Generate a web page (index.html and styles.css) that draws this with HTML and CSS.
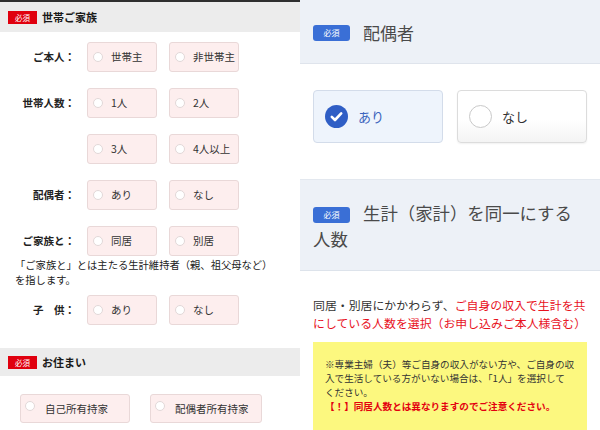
FILE: index.html
```html
<!DOCTYPE html>
<html lang="ja">
<head>
<meta charset="utf-8">
<title>フォーム</title>
<link rel="stylesheet" href="styles.css">
</head>
<body>
<div class="shot">
  <section class="left">
    <div class="topbar"></div>
    <div class="sec-head"><span class="req">必須</span><span class="sec-title">世帯ご家族</span></div>
    <div class="rows">
      <div class="row first"><div class="lbl">ご本人：</div><label class="opt"><span class="radio"></span>世帯主</label><label class="opt"><span class="radio"></span>非世帯主</label></div>
      <div class="row"><div class="lbl">世帯人数：</div><label class="opt"><span class="radio"></span>1人</label><label class="opt"><span class="radio"></span>2人</label></div>
      <div class="row"><div class="lbl"></div><label class="opt"><span class="radio"></span>3人</label><label class="opt"><span class="radio"></span>4人以上</label></div>
      <div class="row"><div class="lbl">配偶者：</div><label class="opt"><span class="radio"></span>あり</label><label class="opt"><span class="radio"></span>なし</label></div>
      <div class="row"><div class="lbl">ご家族と：</div><label class="opt"><span class="radio"></span>同居</label><label class="opt"><span class="radio"></span>別居</label></div>
      <p class="note">「ご家族と」とは主たる生計維持者（親、祖父母など）<br>を指します。</p>
      <div class="row kids"><div class="lbl">子　供：</div><label class="opt"><span class="radio"></span>あり</label><label class="opt"><span class="radio"></span>なし</label></div>
    </div>
    <div class="sec-head sec-head2"><span class="req">必須</span><span class="sec-title">お住まい</span></div>
    <div class="home-opts">
      <label class="hopt w110"><span class="radio"></span>自己所有持家</label>
      <label class="hopt w112"><span class="radio"></span>配偶者所有持家</label>
    </div>
  </section>

  <section class="right">
    <div class="r-head"><span class="req-b">必須</span><span class="r-title">配偶者</span></div>
    <div class="r-opts">
      <label class="r-opt sel">
        <svg class="check" width="23" height="23" viewBox="0 0 23 23"><circle cx="11.5" cy="11.5" r="11.5" fill="#2f5ec5"/><polyline points="6.8,11.8 10,15 16.2,8.4" fill="none" stroke="#fff" stroke-width="2.6" stroke-linecap="round" stroke-linejoin="round"/></svg>
        あり
      </label>
      <label class="r-opt plain"><span class="r-radio"></span>なし</label>
    </div>
    <div class="r-head2"><span class="req-b inline">必須</span>生計（家計）を同一にする<br>人数</div>
    <p class="r-text">同居・別居にかかわらず、<span class="em">ご自身の収入で生計を共</span><br><span class="em">にしている人数を選択（お申し込みご本人様含む）</span></p>
    <div class="r-note">※専業主婦（夫）等ご自身の収入がない方や、ご自身の収<br>入で生活している方がいない場合は、「1人」を選択して<br>ください。<span class="warn">【！】同居人数とは異なりますのでご注意ください。</span></div>
  </section>
</div>
</body>
</html>
```
FILE: styles.css
```css
html, body {
  margin: 0;
  padding: 0;
}
body {
  width: 600px;
  height: 430px;
  overflow: hidden;
  background: #fff;
  font-family: "Noto Sans CJK JP", "Noto Sans", sans-serif;
}
.shot {
  display: flex;
  width: 600px;
  height: 430px;
}
.left {
  width: 300px;
  flex: none;
}
.right {
  width: 300px;
  flex: none;
}

/* ---------- left panel ---------- */
.topbar {
  height: 2px;
  background: #2f2f2f;
}
.sec-head {
  height: 30px;
  background: #ececec;
  display: flex;
  align-items: center;
  padding-left: 8px;
  gap: 5px;
}
.req {
  width: 29px;
  height: 13px;
  background: #e0000e;
  color: #fff;
  font-size: 7.5px;
  line-height: 13px;
  display: flex;
  align-items: center;
  justify-content: center;
}
.sec-title {
  font-size: 11px;
  font-weight: bold;
  color: #1a1a1a;
  line-height: 14px;
}
.rows {
  display: flex;
  flex-direction: column;
}
.row {
  display: flex;
  align-items: center;
  gap: 12px;
  height: 30px;
  margin-top: 16px;
}
.row.first {
  margin-top: 10px;
}
.row.kids {
  margin-top: 8px;
}
.lbl {
  width: 75px;
  text-align: right;
  font-size: 10.5px;
  font-weight: bold;
  color: #222;
  line-height: 14px;
}
.opt {
  width: 70px;
  height: 30px;
  box-sizing: border-box;
  background: #fdeeee;
  border: 1px solid #e9d8d8;
  border-radius: 3px;
  display: flex;
  align-items: center;
  padding-left: 5px;
  font-size: 10.5px;
  line-height: 14px;
  color: #333;
}
.radio {
  width: 10px;
  height: 10px;
  flex: none;
  border-radius: 50%;
  background: #fff;
  border: 1px solid #e2d8d8;
  box-sizing: border-box;
  margin-right: 8px;
}
.note {
  margin: 1px 0 0 15px;
  font-size: 10.3px;
  line-height: 15px;
  color: #222;
}
.sec-head2 {
  height: 28px;
  margin-top: 23px;
}
.home-opts {
  display: flex;
  gap: 20px;
  padding-left: 20px;
  margin-top: 18px;
}
.hopt {
  height: 29px;
  box-sizing: border-box;
  background: #fdeeee;
  border: 1px solid #e9d8d8;
  border-radius: 3px;
  display: flex;
  align-items: center;
  padding-left: 4px;
  font-size: 10.5px;
  line-height: 14px;
  color: #333;
}
.hopt .radio {
  align-self: flex-start;
  margin-top: 6px;
  margin-right: 10px;
}
.w110 { width: 110px; }
.w112 { width: 112px; }

/* ---------- right panel ---------- */
.r-head {
  height: 64px;
  box-sizing: border-box;
  padding: 3px 0 0 13px;
  background: #edf1f7;
  border-bottom: 1px solid #dfe4ec;
  display: flex;
  align-items: center;
  gap: 13px;
}
.req-b {
  width: 37px;
  height: 16px;
  border-radius: 3px;
  background: #3a6fd6;
  color: #fff;
  font-size: 8px;
  line-height: 16px;
  text-align: center;
  display: inline-block;
}
.req-b.inline {
  vertical-align: 2px;
  margin-right: 13px;
}
.r-title {
  font-size: 17px;
  line-height: 22px;
  color: #4a4a4a;
}
.r-opts {
  display: flex;
  gap: 14px;
  padding: 0 13px;
  margin-top: 26px;
}
.r-opt {
  width: 130px;
  height: 53px;
  box-sizing: border-box;
  border-radius: 4px;
  border: 1px solid #d9dde3;
  display: flex;
  align-items: center;
  padding-left: 11px;
  gap: 10px;
  font-size: 13px;
  line-height: 18px;
}
.r-opt.sel {
  background: #eef4fc;
  border-color: #d3dcea;
  color: #3c64bd;
}
.r-opt.plain {
  background: linear-gradient(#fff 55%, #f4f4f4);
  border-color: #dcdcdc;
  color: #333;
  box-shadow: 0 1px 2px rgba(0, 0, 0, 0.06);
}
.check {
  flex: none;
  display: block;
}
.r-radio {
  width: 23px;
  height: 23px;
  flex: none;
  border-radius: 50%;
  border: 1.5px solid #c9c9c9;
  box-sizing: border-box;
  background: #fff;
}
.r-head2 {
  margin-top: 36px;
  background: #edf1f7;
  border-top: 1px solid #e3e8ef;
  border-bottom: 1px solid #dde3eb;
  padding: 20px 13px 18px;
  font-size: 17.4px;
  line-height: 26px;
  color: #4a4a4a;
}
.r-text {
  margin: 25px 13px 0;
  font-size: 11.9px;
  line-height: 18px;
  color: #333;
}
.em {
  color: #e8121e;
}
.r-note {
  margin: 10px 13px 0;
  background: #fcf87f;
  padding: 15px 12px 20px;
  font-size: 9.6px;
  line-height: 14px;
  color: #333;
}
.warn {
  display: block;
  color: #e3000f;
  font-weight: bold;
}
```
